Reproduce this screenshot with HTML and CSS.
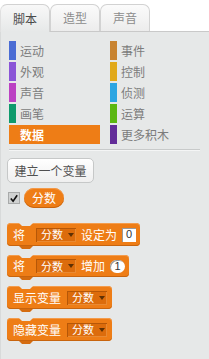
FILE: index.html
```html
<!DOCTYPE html>
<html>
<head>
<meta charset="utf-8">
<link rel="stylesheet" href="styles.css">
</head>
<body>
<div class="tabs">
  <div class="tab active">脚本</div>
  <div class="tab">造型</div>
  <div class="tab">声音</div>
</div>
<div class="panel">
  <div class="cats">
    <div class="cat"><span class="bar c-motion"></span><span>运动</span></div>
    <div class="cat"><span class="bar c-events"></span><span>事件</span></div>
    <div class="cat"><span class="bar c-looks"></span><span>外观</span></div>
    <div class="cat"><span class="bar c-control"></span><span>控制</span></div>
    <div class="cat"><span class="bar c-sound"></span><span>声音</span></div>
    <div class="cat"><span class="bar c-sensing"></span><span>侦测</span></div>
    <div class="cat"><span class="bar c-pen"></span><span>画笔</span></div>
    <div class="cat"><span class="bar c-ops"></span><span>运算</span></div>
    <div class="cat sel"><span class="bar c-data"></span><span>数据</span></div>
    <div class="cat"><span class="bar c-more"></span><span>更多积木</span></div>
  </div>
  <div class="sep"></div>
  <div class="btn">建立一个变量</div>
  <div class="varrow">
    <span class="check"><svg width="11" height="11" viewBox="0 0 11 11"><path d="M2 5.5 L4.5 8.5 L9 2" fill="none" stroke="#111" stroke-width="1.8"/></svg></span>
    <span class="reporter">分数</span>
  </div>
  <div class="blocks">
    <div class="block b1"><span class="lbl first">将</span><span class="dd">分数<i class="arr"></i></span><span class="lbl">设定为</span><span class="inp">0</span></div>
    <div class="block b2"><span class="lbl first">将</span><span class="dd">分数<i class="arr"></i></span><span class="lbl">增加</span><span class="inp round">1</span></div>
    <div class="block b3"><span class="lbl">显示变量</span><span class="dd">分数<i class="arr"></i></span></div>
    <div class="block b3"><span class="lbl">隐藏变量</span><span class="dd">分数<i class="arr"></i></span></div>
  </div>
</div>
</body>
</html>
```
FILE: styles.css
```css
html, body { margin: 0; padding: 0; }
body {
  width: 209px;
  height: 359px;
  overflow: hidden;
  background: #fff;
  font-family: "Noto Sans CJK SC", "Noto Sans", sans-serif;
  font-size: 12px;
}
.tabs {
  height: 27px;
  padding-top: 4px;
  display: flex;
  border-bottom: 1px solid #c9c9c9;
  position: relative;
  z-index: 1;
}
.tab {
  width: 48px;
  height: 26px;
  border: 1px solid #d2d2d2;
  border-bottom: none;
  border-radius: 7px 7px 0 0;
  background: linear-gradient(#fbfbfb, #ececec);
  color: #8c8c8c;
  display: flex;
  align-items: center;
  justify-content: center;
  font-size: 12px;
  line-height: 1;
}
.tab.active {
  background: linear-gradient(#f8f8f8, #e6e8e8);
  color: #4a4a4a;
  height: 27px;
  margin-bottom: -1px;
  border-left-color: #e0e0e0;
}
.panel {
  background: #e6e8e8;
  height: 327px;
  border-left: 1px solid #d8dada;
  box-sizing: border-box;
}
.cats {
  display: grid;
  grid-template-columns: 101px 90px;
  grid-auto-rows: 19px;
  row-gap: 2px;
  padding: 9px 0 0 8px;
}
.cat {
  display: flex;
  align-items: center;
  color: #7c7c7c;
  font-size: 12px;
  line-height: 1;
}
.bar {
  width: 7px;
  height: 19px;
  margin-right: 4px;
  flex: none;
}
.cat.sel {
  background: #ee7d16;
  color: #fff;
  font-weight: bold;
  width: 91px;
}
.c-motion { background: #4a6cd4; }
.c-looks { background: #8a55d7; }
.c-sound { background: #bb42c3; }
.c-pen { background: #0e9a6c; }
.c-data { background: #ee7d16; }
.c-events { background: #c88330; }
.c-control { background: #e1a91a; }
.c-sensing { background: #2ca5e2; }
.c-ops { background: #5cb712; }
.c-more { background: #632d99; }
.sep {
  margin: 5px 9px 0 8px;
  height: 0;
  border-top: 1px solid #c8caca;
  border-bottom: 1px solid #f4f5f5;
}
.btn {
  margin: 7px 0 0 6px;
  width: 85px;
  height: 23px;
  border: 1px solid #c6c8c8;
  border-radius: 5px;
  background: linear-gradient(#ffffff, #efefef);
  color: #505050;
  display: flex;
  align-items: center;
  justify-content: center;
  font-size: 12px;
  line-height: 1;
}
.varrow {
  display: flex;
  align-items: center;
  margin: 4px 0 0 7px;
  height: 22px;
}
.check {
  width: 12px;
  height: 12px;
  background: #d0d2d2;
  border: 1px solid #a8aaaa;
  box-sizing: border-box;
  display: flex;
  margin-right: 4px;
}
.check svg { display: block; }
.reporter {
  background: #ee7d16;
  color: #fff;
  border-radius: 11px;
  height: 20px;
  width: 40px;
  display: flex;
  align-items: center;
  justify-content: center;
  box-shadow: inset 0 -1px 0 #c8640e, inset 0 1px 0 #f39a4a;
  line-height: 1;
}
.blocks {
  display: flex;
  flex-direction: column;
  align-items: flex-start;
  gap: 9px;
  margin: 14px 0 0 6px;
}
.block {
  position: relative;
  background: #ee7d16;
  height: 23px;
  border-radius: 4px;
  display: flex;
  align-items: center;
  gap: 5px;
  padding: 0 4px 0 6px;
  color: #fff;
  font-size: 12px;
  line-height: 1;
  box-shadow: inset 0 -1px 0 #c8640e, inset 0 1px 0 #f49c4c;
}
.block::before {
  content: "";
  position: absolute;
  left: 12px;
  top: 0;
  width: 14px;
  height: 3px;
  background: #e6e8e8;
  clip-path: polygon(0 0, 100% 0, calc(100% - 3px) 100%, 3px 100%);
}
.block::after {
  content: "";
  position: absolute;
  left: 12px;
  top: 100%;
  width: 14px;
  height: 3px;
  background: #d56c10;
  clip-path: polygon(0 0, 100% 0, calc(100% - 3px) 100%, 3px 100%);
}
.lbl.first { margin-right: 6px; }
.b2 { height: 22px; }
.b3 { padding: 0 5px 0 6px; gap: 6px; }
.dd {
  background: #dc6c0c;
  width: 40px;
  height: 14px;
  box-sizing: border-box;
  display: flex;
  align-items: center;
  padding-left: 5px;
  font-size: 11px;
  color: #fff;
  box-shadow: inset 1px 1px 0 #b65707, inset -1px -1px 0 #e98a32;
}
.arr {
  width: 0;
  height: 0;
  border-left: 3px solid transparent;
  border-right: 3px solid transparent;
  border-top: 4px solid #5e3004;
  margin-left: 5px;
}
.inp {
  background: #fff;
  color: #333;
  width: 14px;
  height: 14px;
  display: flex;
  align-items: center;
  justify-content: center;
  font-family: "Liberation Sans", sans-serif;
  font-size: 11px;
  box-shadow: inset 1px 1px 0 #9a9a9a;
}
.inp.round {
  border-radius: 7px;
  width: 15px;
  height: 13px;
}
```
